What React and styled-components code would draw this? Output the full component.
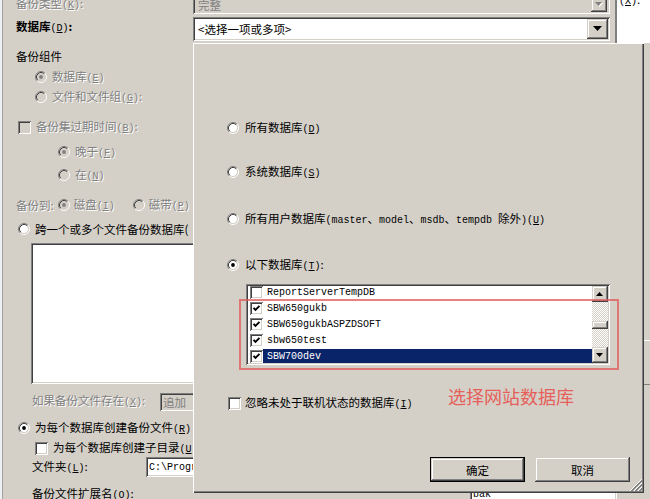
import React from "react";
import styled, { createGlobalStyle } from "styled-components";

const FACE = "#d4d0c8";
const SUNKEN = "inset 1px 1px #808080, inset -1px -1px #fff, inset 2px 2px #404040, inset -2px -2px #d4d0c8";
const RAISED = "inset -1px -1px #404040, inset 1px 1px #d4d0c8, inset -2px -2px #808080, inset 2px 2px #fff";

const GlobalStyle = createGlobalStyle`
  html, body { margin: 0; padding: 0; background: ${FACE}; }
  body {
    font-family: "Noto Sans CJK SC", "Liberation Sans", sans-serif;
    font-size: 11.5px;
    color: #000;
  }
`;

const Screen = styled.div`
  position: relative;
  width: 650px;
  height: 499px;
  overflow: hidden;
  display: flex;
  background: ${FACE};
`;

const Dialog = styled.div`
  width: 617px;
  flex: none;
  box-sizing: border-box;
  display: flex;
  flex-direction: column;
  border-right: 2px solid #808080;
  background: linear-gradient(to right, #eef0f6 0 2px, #a0a0a0 2px 3px, ${FACE} 3px);
`;

const FieldRow = styled.div`
  display: grid;
  grid-template-columns: 193px 417px;
  align-items: center;
  height: ${(p) => p.$h}px;
  margin-top: ${(p) => p.$mt}px;
  flex: none;
  & > span:first-child { padding-left: 16px; padding-bottom: ${(p) => p.$lift || 0}px; }
`;

const Combo = styled.div`
  height: ${(p) => p.$h}px;
  box-sizing: border-box;
  padding: 2px;
  display: flex;
  align-items: center;
  background: ${(p) => (p.$disabled ? FACE : "#fff")};
  box-shadow: ${SUNKEN};
`;

const ComboText = styled.span`
  flex: 1;
  padding-left: 3px;
  color: ${(p) => (p.$disabled ? "#808080" : "#000")};
`;

const DropButton = styled.div`
  width: ${(p) => p.$w}px;
  align-self: stretch;
  margin-right: ${(p) => p.$mr || 0}px;
  display: flex;
  align-items: center;
  justify-content: center;
  background: ${FACE};
  box-shadow: ${RAISED};
`;

const Form = styled.div`
  display: flex;
  flex-direction: column;
`;

const Line = styled.div`
  height: ${(p) => p.$h || 16}px;
  flex: none;
  display: flex;
  align-items: center;
  gap: ${(p) => (p.$gap === undefined ? 4 : p.$gap)}px;
  margin-top: ${(p) => p.$mt}px;
  padding-left: ${(p) => p.$pl}px;
`;

const GridLine = styled.div`
  height: ${(p) => p.$h}px;
  flex: none;
  display: grid;
  grid-template-columns: ${(p) => p.$col}px auto;
  align-items: center;
  margin-top: ${(p) => p.$mt}px;
  padding-left: 32px;
`;

const Text = styled.span`
  white-space: nowrap;
  line-height: 16px;
  margin-left: ${(p) => p.$ml || 0}px;
  color: ${(p) => (p.$disabled ? "#808080" : "#000")};
  text-shadow: ${(p) => (p.$disabled ? "1px 1px #fff" : "none")};
  font-weight: ${(p) => (p.$bold ? 700 : 400)};
`;

const Half = styled.span`
  font-family: "Liberation Mono", monospace;
  font-size: 10px;
  font-weight: 400;
`;

const Mn = ({ k }) => (
  <Half>
    (<u>{k}</u>)
  </Half>
);

const WhiteBox = styled.div`
  margin-top: ${(p) => p.$mt || 0}px;
  margin-left: ${(p) => p.$ml || 0}px;
  width: ${(p) => p.$w}px;
  height: ${(p) => p.$h}px;
  box-sizing: border-box;
  padding: 2px 3px;
  display: flex;
  align-items: center;
  flex: none;
  background: ${(p) => (p.$disabled ? FACE : "#fff")};
  color: ${(p) => (p.$disabled ? "#808080" : "#000")};
  box-shadow: ${SUNKEN};
  font-family: ${(p) => (p.$mono ? '"Liberation Mono", monospace' : "inherit")};
  font-size: ${(p) => (p.$mono ? "10px" : "inherit")};
  overflow: hidden;
  white-space: nowrap;
`;

const SidePanel = styled.div`
  flex: 1;
  display: flex;
  flex-direction: column;
`;

const SideWhite = styled.div`
  height: 43px;
  background: #fff;
  padding-left: 2px;
  overflow: hidden;
  & > span { display: block; margin-top: -9px; }
`;

const SideTab = styled.div`
  margin-top: 297px;
  height: 43px;
  border-top: 1px solid #fff;
  border-bottom: 1px solid #808080;
`;

const CheckBox = styled.span`
  width: 13px;
  height: 13px;
  flex: none;
  box-sizing: border-box;
  margin-left: ${(p) => p.$ml || 0}px;
  display: inline-flex;
  align-items: center;
  justify-content: center;
  background: ${(p) => (p.$disabled ? FACE : "#fff")};
  box-shadow: ${SUNKEN};
`;

const Check = ({ checked, disabled, ml }) => (
  <CheckBox $disabled={disabled} $ml={ml}>
    {checked && (
      <svg width="9" height="9" viewBox="0 0 9 9">
        <path d="M1.5 3.8l2 2 4-4" stroke={disabled ? "#808080" : "#000"} strokeWidth="1.9" fill="none" />
      </svg>
    )}
  </CheckBox>
);

const RadioSvg = styled.svg`
  flex: none;
  margin-left: ${(p) => p.$ml || 0}px;
`;

const Radio = ({ checked, disabled, ml }) => (
  <RadioSvg width="12" height="12" viewBox="0 0 12 12" $ml={ml}>
    <circle cx="6" cy="6" r="4.2" fill={disabled ? FACE : "#fff"} />
    <path d="M2.11 9.89A5.5 5.5 0 0 1 9.89 2.11" fill="none" stroke="#808080" />
    <path d="M9.89 2.11A5.5 5.5 0 0 1 2.11 9.89" fill="none" stroke="#fff" />
    <path d="M2.82 9.18A4.5 4.5 0 0 1 9.18 2.82" fill="none" stroke="#404040" />
    <path d="M9.18 2.82A4.5 4.5 0 0 1 2.82 9.18" fill="none" stroke={FACE} />
    {checked && <circle cx="6" cy="6" r="1.9" fill={disabled ? "#808080" : "#000"} />}
  </RadioSvg>
);

const Arrow = ({ w, h, up, color = "#000", shadow }) => (
  <svg width={w + 1} height={h + 1} viewBox={`0 0 ${w + 1} ${h + 1}`}>
    {shadow && <path d={up ? `M1 ${h + 1}h${w}L${w / 2 + 1} 1z` : `M1 1h${w}L${w / 2 + 1} ${h + 1}z`} fill="#fff" />}
    <path d={up ? `M0 ${h}h${w}L${w / 2} 0z` : `M0 0h${w}L${w / 2} ${h}z`} fill={color} />
  </svg>
);

/* popup */

const Popup = styled.div`
  position: absolute;
  left: 193px;
  top: 43px;
  width: 451px;
  height: 450px;
  box-sizing: border-box;
  padding: 77px 14px 11px 34px;
  display: flex;
  flex-direction: column;
  background: ${FACE};
  box-shadow: inset 1px 1px #fff, inset -1px -1px #404040, inset -2px -2px #808080;
`;

const PopOption = styled.div`
  height: 16px;
  flex: none;
  display: flex;
  align-items: center;
  gap: ${(p) => p.$gap || 6}px;
  margin-top: ${(p) => p.$mt || 0}px;
`;

const ListBox = styled.div`
  margin: 11px 0 0 19px;
  width: 364px;
  height: 81px;
  flex: none;
  box-sizing: border-box;
  padding: 2px;
  display: flex;
  background: #fff;
  box-shadow: ${SUNKEN};
`;

const Items = styled.div`
  flex: 1;
  min-width: 0;
  overflow: hidden;
`;

const ItemRows = styled.div`
  margin-top: -2px;
`;

const Item = styled.div`
  height: 16px;
  display: flex;
  align-items: center;
`;

const ItemName = styled.span`
  flex: 1;
  height: 15px;
  display: flex;
  align-items: center;
  padding-left: 4px;
  font-family: "Liberation Mono", monospace;
  font-size: 10px;
  color: ${(p) => (p.$selected ? "#fff" : "#000")};
  background: ${(p) => (p.$selected ? "#0a246a" : "transparent")};
`;

const ScrollBar = styled.div`
  width: 16px;
  flex: none;
  display: flex;
  flex-direction: column;
  background: repeating-conic-gradient(${FACE} 0 25%, #fff 0 50%) 0 0 / 2px 2px;
`;

const ScrollButton = styled.div`
  height: 16px;
  flex: none;
  display: flex;
  align-items: center;
  justify-content: center;
  background: ${FACE};
  box-shadow: ${RAISED};
`;

const Track = styled.div`
  flex: 1;
`;

const Thumb = styled.div`
  height: 8px;
  margin-top: ${(p) => p.$offset}px;
  background: ${FACE};
  box-shadow: ${RAISED};
`;

const Footer = styled.div`
  margin-top: auto;
  display: flex;
  justify-content: flex-end;
  gap: 10px;
`;

const Button = styled.button`
  width: 95px;
  height: 25px;
  box-sizing: border-box;
  padding: 0;
  font: inherit;
  color: #000;
  background: ${FACE};
  border: ${(p) => (p.$default ? "1px solid #000" : "none")};
  box-shadow: ${RAISED};
`;

const Grip = styled.svg`
  position: absolute;
  right: 2px;
  bottom: 2px;
`;

const RedBox = styled.div`
  position: absolute;
  left: 46px;
  top: 256px;
  width: 380px;
  height: 71px;
  box-sizing: border-box;
  border: 2px solid rgba(226, 88, 88, 0.75);
`;

const RedNote = styled.div`
  position: absolute;
  left: 255px;
  top: 342px;
  font-size: 18px;
  line-height: 22px;
  color: #e65f5a;
  white-space: nowrap;
`;

const databases = [
  { name: "ReportServerTempDB", checked: false },
  { name: "SBW650gukb", checked: true },
  { name: "SBW650gukbASPZDSOFT", checked: true },
  { name: "sbw650test", checked: true },
  { name: "SBW700dev", checked: true, selected: true },
];

export default function App() {
  return (
    <>
      <GlobalStyle />
      <Screen>
        <Dialog>
          <FieldRow $mt={-5} $h={18}>
            <Text $disabled>
              备份类型<Mn k="K" />:
            </Text>
            <Combo $h={18} $disabled>
              <ComboText $disabled>完整</ComboText>
              <DropButton $w={16} $mr={1}>
                <Arrow w={7} h={4} color="#808080" shadow />
              </DropButton>
            </Combo>
          </FieldRow>
          <FieldRow $mt={4} $h={24} $lift={3}>
            <Text $bold>
              数据库<Mn k="D" />:
            </Text>
            <Combo $h={24}>
              <ComboText>&lt;选择一项或多项&gt;</ComboText>
              <DropButton $w={21}>
                <Arrow w={9} h={5} />
              </DropButton>
            </Combo>
          </FieldRow>

          <Form>
            <Line $mt={7} $pl={16}>
              <Text>备份组件</Text>
            </Line>
            <Line $mt={5} $pl={35}>
              <Radio checked disabled />
              <Text $disabled $ml={1}>
                数据库<Mn k="E" />
              </Text>
            </Line>
            <Line $mt={4} $pl={35}>
              <Radio disabled />
              <Text $disabled $ml={1}>
                文件和文件组<Mn k="G" />:
              </Text>
            </Line>
            <Line $mt={14} $pl={18} $gap={5}>
              <Check disabled />
              <Text $disabled>
                备份集过期时间<Mn k="B" />:
              </Text>
            </Line>
            <Line $mt={9} $pl={58}>
              <Radio checked disabled />
              <Text $disabled $ml={1}>
                晚于<Mn k="F" />
              </Text>
            </Line>
            <Line $mt={7} $pl={58}>
              <Radio disabled />
              <Text $disabled $ml={1}>
                在<Mn k="N" />
              </Text>
            </Line>
            <Line $mt={14} $pl={16} $gap={0}>
              <Text $disabled>备份到:</Text>
              <Radio checked disabled ml={4} />
              <Text $disabled $ml={4}>
                磁盘<Mn k="I" />
              </Text>
              <Radio disabled ml={18} />
              <Text $disabled $ml={4}>
                磁带<Mn k="P" />
              </Text>
            </Line>
            <Line $mt={8} $pl={18}>
              <Radio />
              <Text $ml={1}>跨一个或多个文件备份数据库(</Text>
            </Line>
            <WhiteBox $mt={6} $ml={31} $w={220} $h={141} />
            <GridLine $mt={8} $h={18} $col={128}>
              <Text $disabled>
                如果备份文件存在<Mn k="X" />:
              </Text>
              <WhiteBox $w={80} $h={18} $disabled>
                追加
              </WhiteBox>
            </GridLine>
            <Line $mt={10} $pl={18}>
              <Radio checked />
              <Text $ml={1}>
                为每个数据库创建备份文件<Mn k="R" />
              </Text>
            </Line>
            <Line $mt={4} $pl={35} $gap={5}>
              <Check />
              <Text>
                为每个数据库创建子目录<Mn k="U" />
              </Text>
            </Line>
            <GridLine $mt={1} $h={20} $col={114}>
              <Text>
                文件夹<Mn k="L" />:
              </Text>
              <WhiteBox $w={120} $h={20} $mono>
                C:\Program Files
              </WhiteBox>
            </GridLine>
            <GridLine $mt={7} $h={16} $col={438}>
              <Text>
                备份文件扩展名<Mn k="O" />:
              </Text>
              <WhiteBox $w={147} $h={20} $mono>
                bak
              </WhiteBox>
            </GridLine>
          </Form>
        </Dialog>

        <SidePanel>
          <SideWhite>
            <Text>
              <Mn k="X" />:
            </Text>
          </SideWhite>
          <SideTab />
        </SidePanel>

        <Popup>
          <PopOption>
            <Radio />
            <Text>
              所有数据库<Mn k="D" />
            </Text>
          </PopOption>
          <PopOption $mt={28}>
            <Radio />
            <Text>
              系统数据库<Mn k="S" />
            </Text>
          </PopOption>
          <PopOption $mt={31}>
            <Radio />
            <Text>
              所有用户数据库<Half>(master</Half>、<Half>model</Half>、<Half>msdb</Half>、<Half>tempdb </Half>除外<Half>)</Half>
              <Mn k="U" />
            </Text>
          </PopOption>
          <PopOption $mt={30}>
            <Radio checked />
            <Text>
              以下数据库<Mn k="T" />:
            </Text>
          </PopOption>

          <ListBox>
            <Items>
              <ItemRows>
                {databases.map((db) => (
                  <Item key={db.name}>
                    <Check checked={db.checked} ml={2} />
                    <ItemName $selected={db.selected}>{db.name}</ItemName>
                  </Item>
                ))}
              </ItemRows>
            </Items>
            <ScrollBar>
              <ScrollButton>
                <Arrow w={7} h={4} up />
              </ScrollButton>
              <Track>
                <Thumb $offset={19} />
              </Track>
              <ScrollButton>
                <Arrow w={7} h={4} />
              </ScrollButton>
            </ScrollBar>
          </ListBox>

          <PopOption $mt={30} $gap={4}>
            <Check ml={1} />
            <Text>
              忽略未处于联机状态的数据库<Mn k="I" />
            </Text>
          </PopOption>

          <Footer>
            <Button $default>确定</Button>
            <Button>取消</Button>
          </Footer>

          <RedBox />
          <RedNote>选择网站数据库</RedNote>

          <Grip width="12" height="12" viewBox="0 0 12 12">
            {[0, 4, 8].map((o) => (
              <g key={o}>
                <path d={`M${o} 12L12 ${o}`} stroke="#fff" />
                <path d={`M${o + 1} 12L12 ${o + 1}`} stroke="#808080" />
                <path d={`M${o + 2} 12L12 ${o + 2}`} stroke="#808080" />
              </g>
            ))}
          </Grip>
        </Popup>
      </Screen>
    </>
  );
}
